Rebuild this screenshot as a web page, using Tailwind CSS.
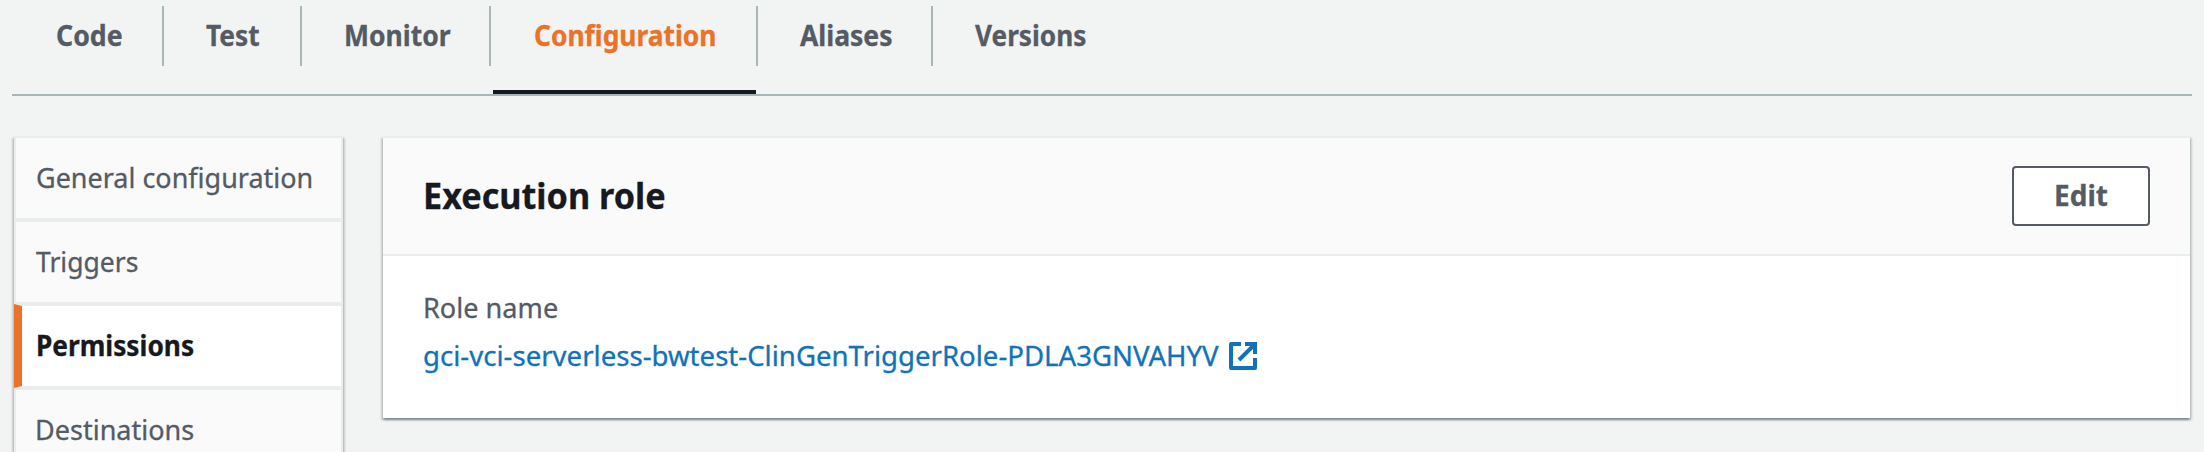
<!DOCTYPE html>
<html lang="en">
<head>
<meta charset="utf-8">
<title>Execution role</title>
<script src="https://cdn.jsdelivr.net/npm/@tailwindcss/browser@4"></script>
</head>
<body class="w-[2204px] h-[452px] overflow-hidden bg-[#f2f3f3] font-['Noto_Sans',sans-serif] text-[28px] leading-[40px] text-[#545b64] [-webkit-text-stroke:0.3px]">
  <nav class="ml-3 w-[2180px] h-24 pt-1.5 border-b-2 border-[#aab7b8] flex font-bold whitespace-nowrap">
    <a class="h-[60px] w-[152px] pl-11 pb-0.5 border-r-2 border-[#aab7b8] flex items-center"><span class="origin-left scale-x-[0.953]">Code</span></a>
    <a class="h-[60px] w-[138px] pl-[42px] pb-0.5 border-r-2 border-[#aab7b8] flex items-center"><span class="origin-left scale-x-[0.94]">Test</span></a>
    <a class="h-[60px] w-[189px] pl-[42px] pb-0.5 border-r-2 border-[#aab7b8] flex items-center"><span class="origin-left scale-x-[0.946]">Monitor</span></a>
    <a class="relative h-[60px] w-[267px] pl-[43px] pb-0.5 border-r-2 border-[#aab7b8] flex items-center text-[#eb7226]"><span class="origin-left scale-x-[0.942]">Configuration</span><i class="absolute left-0.5 top-[84px] w-[263px] h-1 bg-[#16191f]"></i></a>
    <a class="h-[60px] w-[175px] pl-[42px] pb-0.5 border-r-2 border-[#aab7b8] flex items-center"><span class="origin-left scale-x-[0.947]">Aliases</span></a>
    <a class="h-[60px] pl-[42px] pb-0.5 flex items-center"><span class="origin-left scale-x-[0.936]">Versions</span></a>
  </nav>
  <main class="flex items-start pt-10 pl-3.5 whitespace-nowrap">
    <aside class="w-[329px] h-[316px] border-2 border-b-0 border-[#eaeded] bg-[#eaeded] flex flex-col gap-1 shadow-[0_2px_2px_rgba(0,28,36,0.3),2px_2px_2px_rgba(0,28,36,0.15),-2px_2px_2px_rgba(0,28,36,0.15)]">
      <a class="h-20 shrink-0 bg-[#fafafa] pl-5 pb-0.5 flex items-center"><span class="origin-left scale-x-[0.963]">General configuration</span></a>
      <a class="h-20 shrink-0 bg-[#fafafa] pl-5 pb-0.5 flex items-center"><span class="origin-left scale-x-[0.946]">Triggers</span></a>
      <a class="relative h-20 shrink-0 bg-white pl-5 pb-0.5 flex items-center font-bold text-[#16191f]">
        <svg class="absolute -left-0.5 -top-0.5" width="8" height="84" viewBox="0 0 8 84"><path d="M0 0L8 2V82L0 84Z" fill="#eb7226"/></svg>
        <span class="origin-left scale-x-[0.938]">Permissions</span></a>
      <a class="h-[62px] shrink-0 bg-[#fafafa] pl-[19px] pt-[19px] flex items-start"><span class="origin-left scale-x-[0.965]">Destinations</span></a>
    </aside>
    <section class="ml-10 w-[1807px] border-t-2 border-[#eaeded] bg-white shadow-[0_2px_2px_rgba(0,28,36,0.3),2px_2px_2px_rgba(0,28,36,0.15),-2px_2px_2px_rgba(0,28,36,0.15)]">
      <header class="h-[118px] bg-[#fafafa] border-b-2 border-[#eaeded] pl-10 pr-10 flex items-center justify-between">
        <h1 class="origin-left scale-x-[0.95] pb-px text-[36px] leading-[44px] font-bold text-[#16191f]">Execution role</h1>
        <button class="w-[138px] h-[60px] pb-0.5 rounded-sm border-2 border-[#545b64] bg-white flex items-center justify-center font-bold"><span>Edit</span></button>
      </header>
      <div class="h-[162px] pt-[31px] pl-10">
        <div class="flex"><span class="origin-left scale-x-[0.968]">Role name</span></div>
        <a class="mt-2 flex text-[#1172b9]">
          <span class="w-[806px] origin-left scale-x-[0.985]">gci-vci-serverless-bwtest-ClinGenTriggerRole-PDLA3GNVAHYV</span>
          <svg class="mt-[7px]" width="28" height="28" viewBox="0 0 28 28" fill="none" stroke="currentColor" stroke-width="4"><path d="M12 2H2V26H26V16" stroke-linejoin="round"/><path d="M16 2H26V12M25 3L10 18"/></svg>
        </a>
      </div>
    </section>
  </main>
</body>
</html>
